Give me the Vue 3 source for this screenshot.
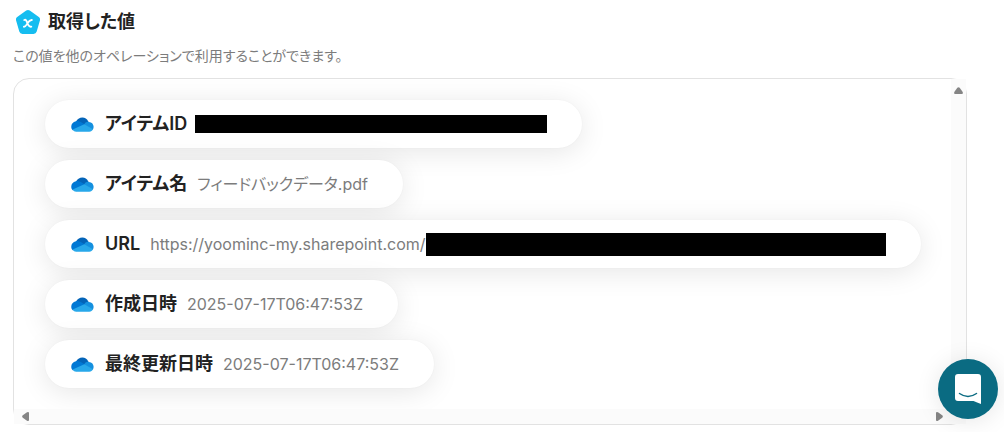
<script setup>
const items = [
  { label: 'アイテムID', value: '', mask: 'id' },
  { label: 'アイテム名', value: 'フィードバックデータ.pdf' },
  { label: 'URL', value: 'https://yoominc-my.sharepoint.com/', mask: 'url' },
  { label: '作成日時', value: '2025-07-17T06:47:53Z' },
  { label: '最終更新日時', value: '2025-07-17T06:47:53Z' },
]
</script>

<template>
  <main class="page">
    <header class="heading">
      <svg class="badge" viewBox="0 0 24 24" aria-hidden="true">
        <path d="M10.2.6Q12-.6 13.800.6L22.800 7Q24.600 8.400 23.900 10.500L20.700 21.600Q20 24 17.500 24H6.500Q4 24 3.300 21.600L.1 10.500Q-.5 8.400 1.200 7Z" fill="#15bdf0" />
        <path d="M8.300 10C9.700 9.300 10.300 10.200 11.100 12.300C12 15.200 12.800 17.300 15.300 16.700M15.800 10C14 9.800 12.600 11.500 11.600 13.100C10.400 15.100 9.500 16.900 7.900 16.700" fill="none" stroke="#fff" stroke-width="1.900" stroke-linecap="round" />
      </svg>
      <h1>取得した値</h1>
    </header>
    <p class="description">この値を他のオペレーションで利用することができます。</p>

    <section class="panel">
      <ul class="list">
        <li v-for="item in items" :key="item.label" class="chip" :class="item.mask">
          <svg class="cloud" viewBox="0 0 24 16" aria-hidden="true">
            <path d="M5 5.300C7-.3 15.500-1.700 18.300 5L20 7L14 9Z" fill="#0364b8" />
            <path d="M5 4.600C7.500 3.900 9.500 5 14 7.800L12 12L1.600 14.200C-1.500 11 .1 5.300 5 4.600Z" fill="#0078d4" />
            <path d="M13.800 7.700C15 5.500 17 4.700 18.800 5.200C23.500 5.400 25 10.300 23 13.500L16 12Z" fill="#1490df" />
            <path d="M1.500 13.200L13.900 7.700L23.200 13.100C22.400 14.800 21 15.600 19.300 15.600H5.200C3.600 15.600 2.300 14.700 1.500 13.200Z" fill="#28a8ea" />
          </svg>
          <span class="label">{{ item.label }}</span>
          <span class="value">{{ item.value }}<span v-if="item.mask" class="mask"></span></span>
        </li>
      </ul>
      <div class="track vertical">
        <button type="button" aria-label="上へスクロール">
          <svg viewBox="0 0 9 7"><path d="M3.300.8Q4.500-.5 5.700.8L8.700 5Q9.300 7 8 7H1Q-.3 7 .3 5Z" /></svg>
        </button>
      </div>
      <div class="track horizontal">
        <button type="button" aria-label="左へスクロール">
          <svg viewBox="0 0 7 9"><path d="M.8 3.300Q-.5 4.500.8 5.700L5 8.700Q7 9.300 7 8V1Q7-.3 5 .3Z" /></svg>
        </button>
        <button type="button" aria-label="右へスクロール">
          <svg viewBox="0 0 7 9"><path d="M6.200 3.300Q7.500 4.500 6.200 5.700L2 8.700Q0 9.300 0 8V1Q0-.3 2 .3Z" /></svg>
        </button>
      </div>
      <div class="corner"></div>
    </section>

    <button type="button" class="chat" aria-label="チャットを開く">
      <svg viewBox="0 0 26 30" aria-hidden="true">
        <path d="M3 0H23Q26 0 26 3V30Q22 28.500 18.500 27H3Q0 27 0 24V3Q0 0 3 0Z" fill="#fff" />
        <path d="M4.500 19.500Q13 25.500 21.500 19.500" fill="none" stroke="#0a6b82" stroke-width="1.500" stroke-linecap="round" />
      </svg>
    </button>
  </main>
</template>

<style>
body {
  background: #fff;
}
</style>

<style scoped>
.page {
  padding: 8px 37px 7px 13px;
  font-family: Inter, "Noto Sans CJK JP", sans-serif;
  font-feature-settings: "palt";
  color: #222;
}

.heading {
  display: flex;
  align-items: center;
  gap: 8px;
  padding-left: 3px;
}

.badge {
  width: 24px;
  height: 24px;
}

h1 {
  margin: 0;
  font-size: 18px;
  line-height: 27px;
  font-weight: 600;
}

.description {
  margin: 10px 0 12px;
  font-size: 14px;
  line-height: 21px;
  color: #7c7c7c;
}

.panel {
  display: grid;
  grid-template-columns: 1fr 15px;
  grid-template-rows: 1fr 15px;
  border: 1px solid #e2e2e2;
  border-radius: 16px;
}

.list {
  display: flex;
  flex-direction: column;
  align-items: flex-start;
  gap: 12px;
  min-width: 0;
  margin: 0;
  padding: 21px 31px;
  overflow: hidden;
  border-top-left-radius: 15px;
  list-style: none;
}

.chip {
  display: flex;
  align-items: center;
  height: 48px;
  padding: 0 35px 0 26px;
  border-radius: 24px;
  background: #fff;
  box-shadow: 0 4px 28px rgba(0, 0, 0, 0.1), 0 0 2px rgba(0, 0, 0, 0.04);
  white-space: nowrap;
}

.cloud {
  width: 23px;
  height: 15px;
  margin-right: 11px;
}

.label {
  margin-right: 10px;
  font-size: 18px;
  line-height: 24px;
  font-weight: 600;
}

.value {
  display: flex;
  align-items: center;
  font-size: 16px;
  line-height: 24px;
  color: #7c7c7c;
}

.mask {
  background: #000;
}

.id .label {
  margin-right: 8px;
}

.id .mask {
  width: 352px;
  height: 18px;
}

.url .mask {
  width: 460px;
  height: 23px;
}

.track {
  display: flex;
  background: #fbfbfb;
}

.vertical {
  flex-direction: column;
}

.horizontal {
  justify-content: space-between;
  padding: 0 4px;
}

.track button {
  display: grid;
  place-items: center;
  width: 15px;
  height: 15px;
  padding: 0;
  border: 0;
  background: none;
}

.vertical button {
  margin-top: 4px;
}

.track svg {
  width: 7px;
  height: 9px;
  fill: #858585;
}

.vertical svg {
  width: 9px;
  height: 7px;
}

.corner {
  background: #fbfbfb;
}

.chat {
  position: fixed;
  right: 6px;
  bottom: 13px;
  display: grid;
  place-items: center;
  width: 60px;
  height: 60px;
  padding: 0;
  border: 0;
  border-radius: 50%;
  background: #0a6b82;
  box-shadow: 0 2px 24px rgba(0, 0, 0, 0.1);
}

.chat svg {
  width: 26px;
  height: 30px;
}
</style>
